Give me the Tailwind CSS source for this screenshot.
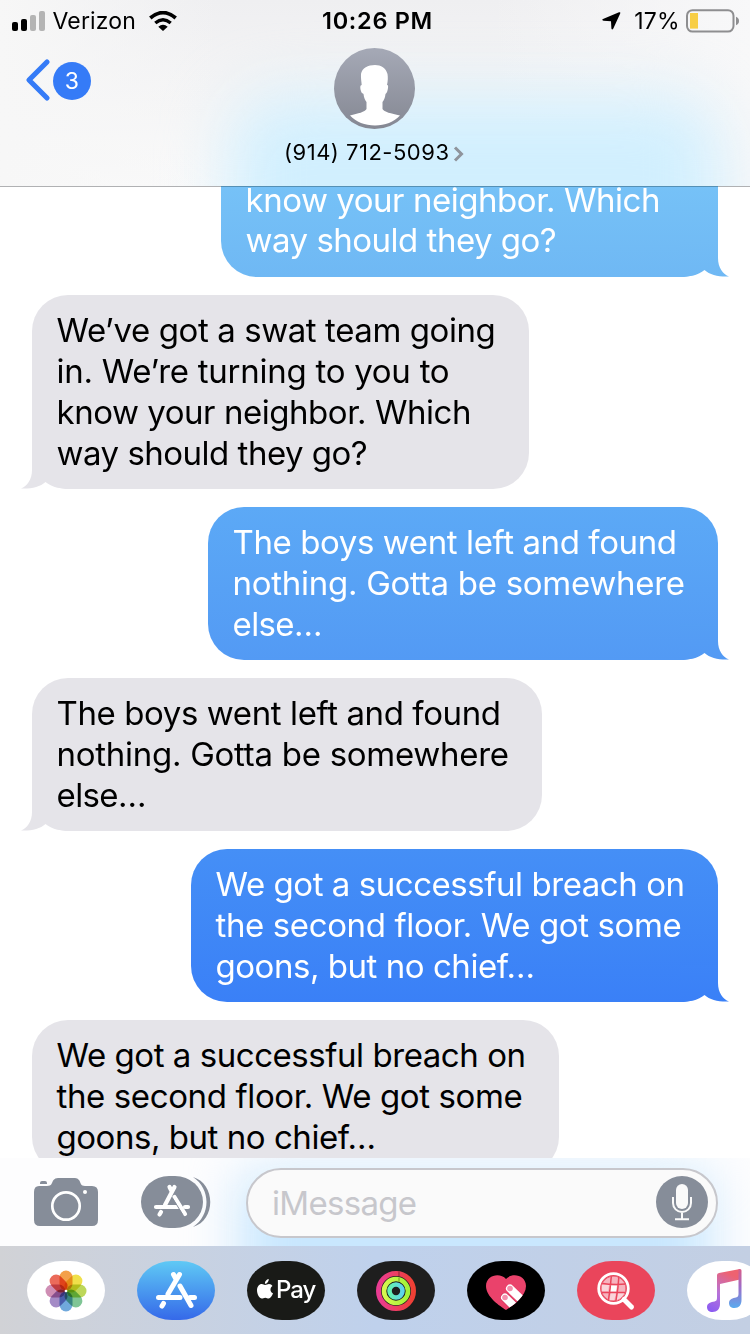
<!DOCTYPE html>
<html lang="en">
<head>
<meta charset="utf-8">
<title>Messages</title>
<script src="https://cdn.jsdelivr.net/npm/@tailwindcss/browser@4"></script>
</head>
<body class="bg-white">
<div class="flex h-[1334px] w-[750px] flex-col overflow-hidden bg-white font-['Inter',sans-serif] text-black">

  <!-- Navigation header -->
  <header class="relative z-10 h-[187px] shrink-0 overflow-hidden bg-gradient-to-b from-[#efeff1] to-[#fafafa]">
    <div class="absolute inset-y-0 left-0 w-[220px] bg-gradient-to-r from-[#f7f7f7] to-[#f7f7f7]/0"></div>
    <div class="absolute inset-y-0 right-0 w-[260px] bg-gradient-to-l from-[#f8f8f9] to-[#f8f8f9]/0"></div>
    <div class="absolute -bottom-24 left-[230px] h-[185px] w-[490px] rounded-[50px] bg-[#d1effe] blur-[32px]"></div>
    <div class="absolute bottom-0 left-0 h-px w-full bg-[#b0b1b3]"></div>
    <div class="absolute bottom-0 left-[221px] h-px w-[497px] bg-[#5590b5]"></div>

    <div class="relative flex h-[41px] items-center justify-between pl-3 pr-[10px]">
      <div class="flex items-center">
        <svg class="h-[20px] w-[34px]" viewBox="0 0 34 20">
          <rect x="0" y="11" width="6" height="9" rx="2"/><rect x="9" y="8" width="6" height="12" rx="2"/>
          <rect x="18" y="4" width="6" height="16" rx="2" fill="#b4b4b4"/><rect x="27" y="0" width="6" height="20" rx="2" fill="#b4b4b4"/>
        </svg>
        <span class="ml-[6.500px] pt-px text-[23px] leading-[40px] tracking-[0.15px]">Verizon</span>
        <svg class="ml-[13px] h-[20px] w-[28px]" viewBox="0 0 28 20">
          <path d="M14 20 L9.3 15.7 Q14 11.8 18.7 15.7 Z"/>
          <path d="M6.3 12 Q14 5.6 21.7 12" fill="none" stroke="#000" stroke-width="3.4"/>
          <path d="M1.3 7 Q14 -3.8 26.7 7" fill="none" stroke="#000" stroke-width="3.7"/>
        </svg>
      </div>
      <div class="flex items-center">
        <svg class="h-[18px] w-[19px]" viewBox="0 0 19 18"><path d="M17 .3 Q18.8-.3 18.2 1.5 L11.2 16.8 Q10 18.5 9.4 16.5 L9 9.3 L1.5 8.8 Q-.8 8 1 7 Z"/></svg>
        <span class="ml-[13px] pt-px text-[23px] leading-[40px] tracking-[0.3px]">17%</span>
        <svg class="ml-[6px] h-[24px] w-[54px]" viewBox="0 0 54 24">
          <rect x="1" y="1.2" width="46.5" height="21.4" rx="5.5" fill="none" stroke="#8e8e90" stroke-width="2"/>
          <rect x="4" y="4" width="8" height="15.600" fill="#f7ce46"/>
          <path d="M50 7.800 Q53 9 53 12 Q53 15 50 16.200 Z" fill="#8e8e90"/>
        </svg>
      </div>
    </div>
    <div class="absolute inset-x-0 top-0 text-center text-[23.5px] font-semibold leading-[41px] tracking-[0.7px] pl-[5px]">10:26 PM</div>

    <div class="relative grid grid-cols-3">
      <div class="flex items-start pl-[25px] pt-[17px]">
        <svg class="h-[44px] w-[26px]" viewBox="0 0 26 44"><path d="M22 4 L4 22 L22 40" fill="none" stroke="#357bf7" stroke-width="5.200" stroke-linecap="round" stroke-linejoin="round"/></svg>
        <span class="ml-[2px] mt-[4px] flex size-[37.500px] items-center justify-center rounded-full bg-[#357bf7] text-[23px] text-white">3</span>
      </div>
      <div class="flex flex-col items-center pr-[1.500px] pt-[7px]">
        <svg class="size-[81px]" viewBox="0 0 81 81">
          <defs><linearGradient id="avatar" x2="0" y2="1"><stop stop-color="#a5a9b6"/><stop offset="1" stop-color="#858893"/></linearGradient></defs>
          <circle cx="40.500" cy="40.500" r="40.500" fill="url(#avatar)"/>
          <path fill="#fff" d="M41 17 C34 17 28 20 27 26 C26.700 30 27.500 34 27.700 37 C26 37 26 40 27 43 C27.700 46 29 45 29.500 46 C30 50 31 52 32.500 54 L32.500 61 C31 64 24 65.500 16 67.500 C22 74 31 77.500 41 77.500 C51 77.500 60 74 66 67.500 C57 65.500 50 64 48.500 61 L48.500 54 C50 52 51 50 51.500 46 C53 45 53.500 43 54 40 C54.500 37 53.500 37 53 37 C54 33 54 29 53.500 26 C52 20 47 17 41 17 Z"/>
        </svg>
        <div class="mt-[9px] flex items-center">
          <span class="text-[22px] leading-[28px] tracking-[0.5px]">(914) 712-5093</span>
          <svg class="ml-[4px] mt-[3px] h-[16px] w-[11px]" viewBox="0 0 11 16"><path d="M2 1.500 L8.500 8 L2 14.500" fill="none" stroke="#8f949c" stroke-width="3"/></svg>
        </div>
      </div>
    </div>
  </header>

  <!-- Conversation -->
  <main class="flex h-[971px] shrink-0 flex-col gap-[18.500px] overflow-hidden pl-8 pr-8 text-[33px] leading-[40.900px]">
    <div class="relative isolate -mt-[7px] h-[96.500px] w-[497px] shrink-0 self-end rounded-b-[36px] bg-gradient-to-b from-[#76c2f7] to-[#6fb8f4] pl-[24.500px] leading-[40.400px] text-white">
      <p class="whitespace-nowrap tracking-[-0.46px]">know your neighbor. Which</p>
      <p class="whitespace-nowrap tracking-[-0.5px]">way should they go?</p>
      <svg class="absolute -right-[11px] bottom-0 -z-10 h-[37px] w-[49px]" viewBox="0 0 49 37"><defs><linearGradient id="tail1" x2="0" y2="1"><stop stop-color="#72bcf5"/><stop offset="1" stop-color="#6fb8f4"/></linearGradient></defs><path fill="url(#tail1)" d="M38 0 V18 C38 28 43 34 49 36.500 C39 37 30 35 24.500 30 C18 35 10 37 0 37 V0Z"/></svg>
    </div>

    <div class="relative isolate h-[193.500px] w-[497px] shrink-0 self-start rounded-[36px] bg-[#e5e4e9] pl-[24.500px] pt-[15px]">
      <p class="whitespace-nowrap tracking-[-0.42px]">We’ve got a swat team going</p>
      <p class="whitespace-nowrap tracking-[-0.26px]">in. We’re turning to you to</p>
      <p class="whitespace-nowrap tracking-[-0.46px]">know your neighbor. Which</p>
      <p class="whitespace-nowrap tracking-[-0.5px]">way should they go?</p>
      <svg class="absolute -left-[11px] bottom-0 -z-10 h-[37px] w-[49px]" viewBox="0 0 49 37"><path fill="#e5e4e9" d="M11 0 V18 C11 28 6 34 0 36.500 C10 37 19 35 24.500 30 C31 35 39 37 49 37 V0Z"/></svg>
    </div>

    <div class="relative isolate h-[152.500px] w-[510px] shrink-0 self-end rounded-[36px] bg-gradient-to-b from-[#5ca9f6] to-[#539af4] pl-[24.500px] pt-[15px] text-white">
      <p class="whitespace-nowrap tracking-[-0.4px]">The boys went left and found</p>
      <p class="whitespace-nowrap tracking-[-0.27px]">nothing. Gotta be somewhere</p>
      <p class="whitespace-nowrap tracking-[-0.6px]">else…</p>
      <svg class="absolute -right-[11px] bottom-0 -z-10 h-[37px] w-[49px]" viewBox="0 0 49 37"><defs><linearGradient id="tail2" x2="0" y2="1"><stop stop-color="#559ef4"/><stop offset="1" stop-color="#539af4"/></linearGradient></defs><path fill="url(#tail2)" d="M38 0 V18 C38 28 43 34 49 36.500 C39 37 30 35 24.500 30 C18 35 10 37 0 37 V0Z"/></svg>
    </div>

    <div class="relative isolate h-[152.500px] w-[510px] shrink-0 self-start rounded-[36px] bg-[#e5e4e9] pl-[24.500px] pt-[15px]">
      <p class="whitespace-nowrap tracking-[-0.4px]">The boys went left and found</p>
      <p class="whitespace-nowrap tracking-[-0.27px]">nothing. Gotta be somewhere</p>
      <p class="whitespace-nowrap tracking-[-0.6px]">else…</p>
      <svg class="absolute -left-[11px] bottom-0 -z-10 h-[37px] w-[49px]" viewBox="0 0 49 37"><path fill="#e5e4e9" d="M11 0 V18 C11 28 6 34 0 36.500 C10 37 19 35 24.500 30 C31 35 39 37 49 37 V0Z"/></svg>
    </div>

    <div class="relative isolate h-[152.500px] w-[527px] shrink-0 self-end rounded-[36px] bg-gradient-to-b from-[#458ff6] to-[#3a80f7] pl-[24.500px] pt-[15px] text-white">
      <p class="whitespace-nowrap tracking-[-0.45px]">We got a successful breach on</p>
      <p class="whitespace-nowrap tracking-[-0.38px]">the second floor. We got some</p>
      <p class="whitespace-nowrap tracking-[-0.46px]">goons, but no chief…</p>
      <svg class="absolute -right-[11px] bottom-0 -z-10 h-[37px] w-[49px]" viewBox="0 0 49 37"><defs><linearGradient id="tail3" x2="0" y2="1"><stop stop-color="#3d84f7"/><stop offset="1" stop-color="#3a80f7"/></linearGradient></defs><path fill="url(#tail3)" d="M38 0 V18 C38 28 43 34 49 36.500 C39 37 30 35 24.500 30 C18 35 10 37 0 37 V0Z"/></svg>
    </div>

    <div class="relative h-[152.500px] w-[527px] shrink-0 self-start rounded-[36px] bg-[#e5e4e9] pl-[24.500px] pt-[15px]">
      <p class="whitespace-nowrap tracking-[-0.45px]">We got a successful breach on</p>
      <p class="whitespace-nowrap tracking-[-0.38px]">the second floor. We got some</p>
      <p class="whitespace-nowrap tracking-[-0.46px]">goons, but no chief…</p>
    </div>
  </main>

  <!-- Compose bar -->
  <section class="relative flex h-[88px] shrink-0 items-center overflow-hidden bg-[#fdfdfe] pl-[34px]">
    <div class="absolute left-[240px] top-[16px] h-[180px] w-[470px] bg-[#c9e7fe] blur-[26px]"></div>
    <svg class="relative h-[48px] w-[64px]" viewBox="0 0 64 48">
      <path fill="#868d99" d="M6 6 V5 Q6 3 8 3 H11 Q13 3 13 5 V6Z M5 8 H13 C18 8 17.500 5 19.500 2 Q21 0 24 0 H41 Q43.500 0 45 2 C47 5 46.500 8 51 8 H58 Q64 8 64 14 V42 Q64 48 58 48 H6 Q0 48 0 42 V14 Q0 8 5 8Z"/>
      <circle cx="32" cy="28" r="13.700" fill="none" stroke="#fff" stroke-width="2.700"/><circle cx="51" cy="14" r="2" fill="#fff"/>
    </svg>
    <svg class="relative ml-[43px] h-[52px] w-[70px]" viewBox="0 0 70 52">
      <rect width="62" height="52" rx="28" ry="26" fill="#868d99"/>
      <path d="M52 1 C75 8 75 44 52 51 C70 39 70 13 52 1Z" fill="#868d99"/>
      <g fill="none" stroke="#fff" stroke-linecap="round" stroke-width="4.200">
        <path d="M33.500 11 L24 29 M20 36 L18.500 38.500 M28.500 11 L30.500 15 M15 31 H38.500 M44 31 H47"/>
        <path d="M33.500 21 L44 38"/><path d="M31.500 22 L42 39" stroke="#868d99" stroke-width="1"/>
      </g>
    </svg>
    <div class="relative ml-[35px] mt-[2px] flex h-[70px] w-[472px] items-center justify-between rounded-full border-2 border-[#c7c7cc] bg-[#fafafa] pl-[24px] pr-[8px]">
      <span class="text-[33px] leading-[40px] tracking-[-0.7px] text-[#c7c7cc]">iMessage</span>
      <svg class="mb-[3px] size-[52px]" viewBox="0 0 52 52">
        <circle cx="26" cy="26" r="26" fill="#868d99"/><rect x="20" y="8" width="12" height="25" rx="6" fill="#fafafa"/>
        <path d="M17 21 V27 A9 9 0 0 0 35 27 V21 M26 36 V43 M19 43.200 H33" fill="none" stroke="#fafafa" stroke-width="2"/>
      </svg>
    </div>
  </section>

  <!-- App strip -->
  <footer class="flex h-[88px] shrink-0 items-center gap-8 overflow-hidden bg-gradient-to-r from-[#d1d2d6] via-[#bfd1ec] to-[#c3cfe3] pl-[27px]">
    <svg class="h-[59px] w-[78px] shrink-0" viewBox="0 0 78 59">
      <rect width="78" height="59" rx="35" ry="29.500" fill="#fff"/>
      <g transform="translate(39 30)">
        <g class="[&>rect]:mix-blend-multiply">
          <rect x="-6.500" y="-20.500" width="13" height="20" rx="6.500" fill="#f3a04a"/>
          <rect x="-6.500" y="-20.500" width="13" height="20" rx="6.500" fill="#f0e04a" transform="rotate(45)"/>
          <rect x="-6.500" y="-20.500" width="13" height="20" rx="6.500" fill="#bdd75a" transform="rotate(90)"/>
          <rect x="-6.500" y="-20.500" width="13" height="20" rx="6.500" fill="#7fc595" transform="rotate(135)"/>
          <rect x="-6.500" y="-20.500" width="13" height="20" rx="6.500" fill="#70a9dc" transform="rotate(180)"/>
          <rect x="-6.500" y="-20.500" width="13" height="20" rx="6.500" fill="#a48bc6" transform="rotate(225)"/>
          <rect x="-6.500" y="-20.500" width="13" height="20" rx="6.500" fill="#cf8eb4" transform="rotate(270)"/>
          <rect x="-6.500" y="-20.500" width="13" height="20" rx="6.500" fill="#eb6b5a" transform="rotate(315)"/>
        </g>
        <circle r="1.300" fill="#fff"/>
      </g>
    </svg>
    <svg class="h-[59px] w-[78px] shrink-0" viewBox="0 0 78 59">
      <defs><linearGradient id="store" x2="0" y2="1"><stop stop-color="#5fc9f5"/><stop offset="1" stop-color="#3569e9"/></linearGradient></defs>
      <rect width="78" height="59" rx="35" ry="29.500" fill="url(#store)"/>
      <g fill="none" stroke="#fff" stroke-linecap="round" stroke-width="5">
        <path d="M42.500 13.500 L31 33 M26.500 42.500 L25 45 M36.500 13.500 L39 18 M21.500 36.500 H43 M53 36.500 H57.500"/>
        <path d="M43 25 L54 44.500"/>
      </g>
    </svg>
    <div class="flex h-[59px] w-[78px] shrink-0 items-center rounded-[35px/29.5px] bg-[#191a17] pl-[10px] text-white">
      <svg class="mb-[3px] h-[20px] w-[16px]" viewBox="0 0 16 20" fill="#fff"><path d="M8 6 C9.500 6 10.500 5 12 5 C13.500 5 14.800 5.800 15.500 7 C12.500 9 13 13 16 14.300 C15 17 13.500 19.500 11.700 19.500 C10.300 19.500 9.800 18.700 8.300 18.700 C6.700 18.700 6 19.500 4.800 19.500 C2.500 19.500 0 15.500 0 11.300 C0 7.500 2.300 5 4.800 5 C6.200 5 7 6 8 6Z M7.900 4.800 C7.700 2.500 9.500 .3 11.700 0 C12 2.500 10 4.800 7.900 4.800Z"/></svg>
      <span class="ml-[3px] text-[24px] font-medium leading-[30px] tracking-[-1px]">Pay</span>
    </div>
    <svg class="h-[59px] w-[78px] shrink-0" viewBox="0 0 78 59">
      <defs>
        <linearGradient id="move"><stop stop-color="#ea3c93"/><stop offset="1" stop-color="#ef4033"/></linearGradient>
        <linearGradient id="train"><stop stop-color="#d6f94e"/><stop offset="1" stop-color="#a2f238"/></linearGradient>
        <linearGradient id="stand"><stop stop-color="#64f3ae"/><stop offset="1" stop-color="#5fd3ec"/></linearGradient>
      </defs>
      <rect width="78" height="59" rx="35" ry="29.500" fill="#1e1e1e"/>
      <g fill="none" stroke-width="5">
        <circle cx="39" cy="30" r="17.500" stroke="url(#move)"/><circle cx="39" cy="30" r="12" stroke="url(#train)" stroke-width="4.600"/><circle cx="39" cy="30" r="6.500" stroke="url(#stand)" stroke-width="4.600"/>
        <path d="M42 10.500 V15 M42 16.500 V20.500" stroke="#000" stroke-opacity=".2" stroke-width="2"/>
      </g>
    </svg>
    <svg class="h-[59px] w-[78px] shrink-0" viewBox="0 0 78 59">
      <defs><clipPath id="heart"><path d="M39 49 C33 45 19 36 19 25 C19 14 33 11 39 18 C45 11 59 14 59 25 C59 36 45 45 39 49Z"/></clipPath></defs>
      <rect width="78" height="59" rx="35" ry="29.500" fill="#000"/>
      <g clip-path="url(#heart)">
        <rect x="18" y="12" width="42" height="38" fill="#ea426b"/>
        <g stroke-linecap="round"><path d="M43 27.500 L60 44" stroke="#fff" stroke-width="8"/><path d="M38 36.500 L54 52" stroke="#c92f55" stroke-width="9"/><path d="M38 36.500 L54 52" stroke="#fff" stroke-width="8"/></g>
        <circle cx="43" cy="27.500" r="2.800" fill="#f490ad"/><circle cx="38" cy="36.500" r="2.800" fill="#f490ad"/>
      </g>
    </svg>
    <svg class="h-[59px] w-[78px] shrink-0" viewBox="0 0 78 59">
      <defs><clipPath id="lens"><circle cx="36.500" cy="27.500" r="12.500"/></clipPath></defs>
      <rect width="78" height="59" rx="35" ry="29.500" fill="#ea455b"/>
      <path d="M47 38.500 L54.500 46" stroke="#fff" stroke-width="5" stroke-linecap="round"/>
      <circle cx="36.500" cy="27.500" r="14.800" fill="none" stroke="#fff" stroke-width="2.800"/>
      <g clip-path="url(#lens)">
        <rect x="23" y="14" width="27" height="27" fill="#f7b3be"/>
        <path d="M34 24.500 H40 L39 30.500 H33Z" fill="#fff"/><path d="M24 24 H32 L31 30 H24Z M34 32 H39 L37 40 H32Z M41 32 H49 V40 H39Z" fill="#fad5db"/>
        <path d="M34.500 13 Q33.500 27 31 42 M42 13 Q41.500 27 38.500 42 M23 22 Q36 24.500 50 23 M23 31.500 H50" fill="none" stroke="#ea455b" stroke-width="1.500"/>
        <circle cx="36.500" cy="27.500" r="12.700" fill="none" stroke="#ea455b" stroke-width="1.500"/>
      </g>
    </svg>
    <svg class="h-[59px] w-[78px] shrink-0" viewBox="0 0 78 59">
      <defs><linearGradient id="note" x1="0" y1="1" x2=".45" y2="0"><stop stop-color="#8659f5"/><stop offset=".5" stop-color="#b773d8"/><stop offset="1" stop-color="#ee6270"/></linearGradient>
      <linearGradient id="noteRight" x2="0" y2="1"><stop stop-color="#d95d87"/><stop offset=".45" stop-color="#a06bc7"/><stop offset="1" stop-color="#58abef"/></linearGradient></defs>
      <rect width="78" height="59" rx="35" ry="29.500" fill="#fff"/>
      <path fill="url(#note)" d="M30 14 Q30 12.500 32 12 L53 8 V18.500 L33 23 V43 C33 48 30 51 25.500 51 C22 51 20 49 20 46 C20 42 24 41 27.500 40.500 Q30 40 30 37Z"/>
      <path fill="url(#noteRight)" d="M51.500 8.200 L52.500 8 Q54.500 7.700 54.500 9.500 V39 C54.500 44 52 47 47.500 47 C44 47 42 45 42 42 C42 38 46 37 49 36.500 Q51.500 36 51.500 33Z"/>
    </svg>
  </footer>
</div>
</body>
</html>
